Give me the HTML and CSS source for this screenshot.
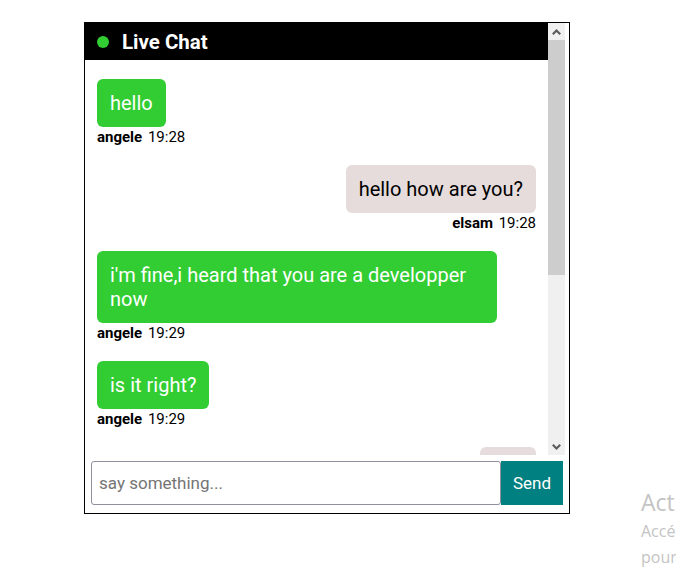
FILE: index.html
```html
<!DOCTYPE html>
<html lang="en">
<head>
<meta charset="utf-8">
<title>Live Chat</title>
<link rel="stylesheet" href="styles.css">
</head>
<body>
<div class="chat">
  <div class="chat-body">
    <div class="chat-scroll">
      <div class="chat-header">
        <span class="status-dot"></span>
        <span class="chat-title">Live Chat</span>
      </div>
      <div class="messages">
        <div class="msg msg-in">
          <div class="bubble">hello</div>
          <div class="meta"><b>angele</b> 19:28</div>
        </div>
        <div class="msg msg-out">
          <div class="bubble">hello how are you?</div>
          <div class="meta"><b>elsam</b> 19:28</div>
        </div>
        <div class="msg msg-in">
          <div class="bubble">i'm fine,i heard that you are a developper now</div>
          <div class="meta"><b>angele</b> 19:29</div>
        </div>
        <div class="msg msg-in">
          <div class="bubble">is it right?</div>
          <div class="meta"><b>angele</b> 19:29</div>
        </div>
        <div class="msg msg-out">
          <div class="bubble">yes</div>
          <div class="meta"><b>elsam</b> 19:30</div>
        </div>
      </div>
    </div>
    <div class="scrollbar">
      <div class="sb-btn">
        <svg width="9" height="6" viewBox="0 0 9 6"><path d="M0.8 5.2 L4.5 1.5 L8.2 5.2" fill="none" stroke="#5a5a5a" stroke-width="2.1"/></svg>
      </div>
      <div class="sb-thumb"></div>
      <div class="sb-track"></div>
      <div class="sb-btn">
        <svg width="9" height="6" viewBox="0 0 9 6"><path d="M0.8 0.8 L4.5 4.5 L8.2 0.8" fill="none" stroke="#5a5a5a" stroke-width="2.1"/></svg>
      </div>
    </div>
  </div>
  <form class="composer">
    <input class="composer-input" type="text" placeholder="say something...">
    <button class="composer-send" type="button">Send</button>
  </form>
</div>
<div class="activation">
  <div class="activation-title">Activer Windows</div>
  <div class="activation-text">Accédez aux paramètres</div>
  <div class="activation-text">pour activer Windows.</div>
</div>
</body>
</html>
```

FILE: styles.css
```css
html, body {
  margin: 0;
  padding: 0;
  overflow: hidden;
  background: #ffffff;
  font-family: Roboto, "Liberation Sans", Arial, sans-serif;
}

body {
  width: 676px;
  height: 581px;
  position: relative;
}

.chat {
  box-sizing: border-box;
  width: 486px;
  height: 492px;
  margin: 22px 0 0 84px;
  border: 1px solid #000000;
  background: #ffffff;
}

.chat-body {
  display: flex;
  width: 480px;
  height: 432px;
}

.chat-scroll {
  flex: 1;
  overflow: hidden;
}

.scrollbar {
  width: 17px;
  display: flex;
  flex-direction: column;
  background: #f0f0f0;
}

.sb-btn {
  height: 17px;
  display: flex;
  align-items: center;
  justify-content: center;
}

.sb-thumb {
  height: 235px;
  background: #cdcdcd;
}

.sb-track {
  flex: 1;
}

.chat-header {
  height: 37px;
  background: #000000;
  display: flex;
  align-items: center;
  padding-left: 12px;
  gap: 13px;
}

.status-dot {
  width: 12px;
  height: 12px;
  border-radius: 50%;
  background: #32cd32;
}

.chat-title {
  color: #ffffff;
  font-weight: 700;
  font-size: 20.5px;
}

.messages {
  padding: 19px 12px;
  display: flex;
  flex-direction: column;
  gap: 20px;
}

.msg {
  display: flex;
  flex-direction: column;
}

.msg-in {
  align-items: flex-start;
}

.msg-out {
  align-items: flex-end;
}

.bubble {
  max-width: 374px;
  padding: 12px 13px;
  border-radius: 6px;
  font-size: 20px;
  line-height: 24px;
}

.msg-in .bubble {
  background: #32cd32;
  color: #ffffff;
}

.msg-out .bubble {
  background: #e6dcdc;
  color: #000000;
}

.meta {
  font-size: 15px;
  line-height: 18px;
  padding-top: 1px;
  margin-bottom: -1px;
  color: #000000;
}

.meta b {
  margin-right: 2px;
}

.composer {
  display: flex;
  padding: 6px 6px 8px;
  margin: 0;
}

.composer-input {
  box-sizing: border-box;
  width: 410px;
  height: 44px;
  margin: 0;
  padding: 0 7px;
  border: 1px solid #8f8f9d;
  border-radius: 3px;
  font-family: Roboto, "Liberation Sans", Arial, sans-serif;
  font-size: 17px;
  color: #000000;
  outline: none;
}

.composer-input::placeholder {
  color: #757575;
}

.composer-send {
  width: 62px;
  height: 44px;
  margin: 0;
  border: none;
  background: #008080;
  color: #ffffff;
  font-family: Roboto, "Liberation Sans", Arial, sans-serif;
  font-size: 17px;
  padding: 0;
}

.activation {
  position: absolute;
  left: 641px;
  top: 486px;
  white-space: nowrap;
  color: #c4c4c4;
  font-family: "Open Sans", "Noto Sans", sans-serif;
}

.activation-title {
  font-size: 23px;
  line-height: 32px;
}

.activation-text {
  font-size: 16px;
  line-height: 26px;
}
```
